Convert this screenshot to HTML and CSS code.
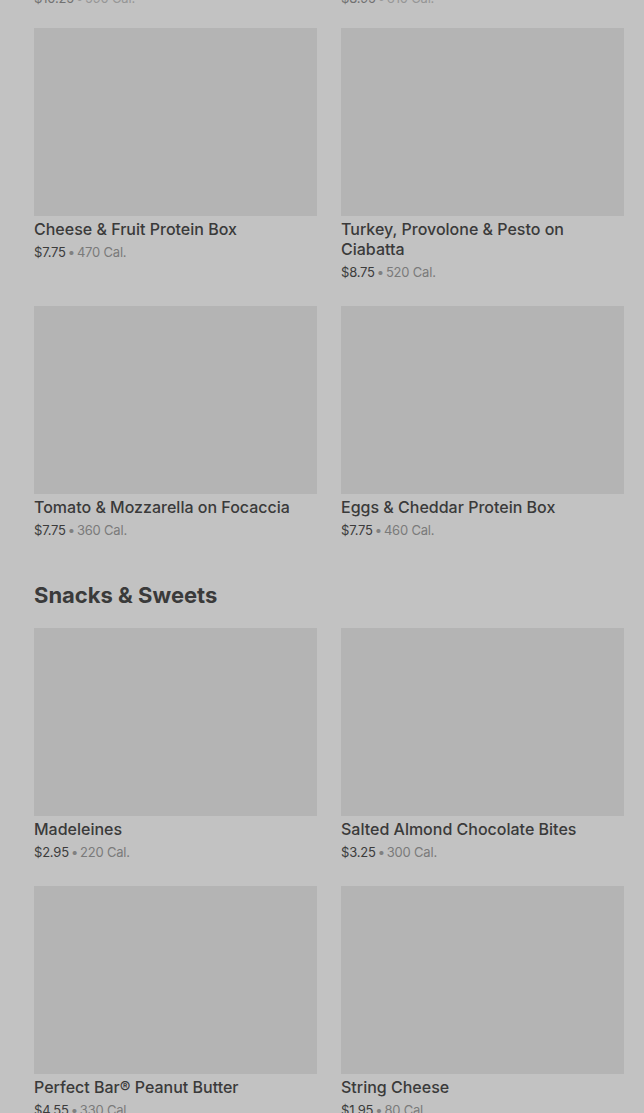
FILE: index.html
```html
<!DOCTYPE html>
<html lang="en">
<head>
<meta charset="utf-8">
<title>Menu</title>
<link rel="stylesheet" href="styles.css">
</head>
<body>
<main class="menu">
  <div class="grid prev">
    <div class="card"><div class="meta"><span class="price">$10.25</span><span class="dot">•</span><span class="cal">590 Cal.</span></div></div>
    <div class="card"><div class="meta"><span class="price">$8.95</span><span class="dot">•</span><span class="cal">610 Cal.</span></div></div>
  </div>

  <div class="grid">
    <div class="card">
      <div class="thumb"></div>
      <div class="name">Cheese &amp; Fruit Protein Box</div>
      <div class="meta"><span class="price">$7.75</span><span class="dot">•</span><span class="cal">470 Cal.</span></div>
    </div>
    <div class="card">
      <div class="thumb"></div>
      <div class="name">Turkey, Provolone &amp; Pesto on Ciabatta</div>
      <div class="meta"><span class="price">$8.75</span><span class="dot">•</span><span class="cal">520 Cal.</span></div>
    </div>
    <div class="card">
      <div class="thumb"></div>
      <div class="name">Tomato &amp; Mozzarella on Focaccia</div>
      <div class="meta"><span class="price">$7.75</span><span class="dot">•</span><span class="cal">360 Cal.</span></div>
    </div>
    <div class="card">
      <div class="thumb"></div>
      <div class="name">Eggs &amp; Cheddar Protein Box</div>
      <div class="meta"><span class="price">$7.75</span><span class="dot">•</span><span class="cal">460 Cal.</span></div>
    </div>
  </div>

  <h2 class="section-title">Snacks &amp; Sweets</h2>

  <div class="grid">
    <div class="card">
      <div class="thumb"></div>
      <div class="name">Madeleines</div>
      <div class="meta"><span class="price">$2.95</span><span class="dot">•</span><span class="cal">220 Cal.</span></div>
    </div>
    <div class="card">
      <div class="thumb"></div>
      <div class="name">Salted Almond Chocolate Bites</div>
      <div class="meta"><span class="price">$3.25</span><span class="dot">•</span><span class="cal">300 Cal.</span></div>
    </div>
    <div class="card">
      <div class="thumb"></div>
      <div class="name">Perfect Bar® Peanut Butter</div>
      <div class="meta"><span class="price">$4.55</span><span class="dot">•</span><span class="cal">330 Cal.</span></div>
    </div>
    <div class="card">
      <div class="thumb"></div>
      <div class="name">String Cheese</div>
      <div class="meta"><span class="price">$1.95</span><span class="dot">•</span><span class="cal">80 Cal.</span></div>
    </div>
  </div>
</main>
</body>
</html>
```

FILE: styles.css
```css
html, body {
  margin: 0;
  padding: 0;
  background: #c2c2c2;
  overflow: hidden;
}
body {
  font-family: Inter, "Noto Sans", Arial, sans-serif;
  color: #3a3a3a;
}
.menu {
  display: flex;
  flex-direction: column;
  padding: 0 20px 0 34px;
}
.grid {
  display: grid;
  grid-template-columns: 1fr 1fr;
  column-gap: 24px;
  row-gap: 24px;
}
.prev {
  margin-top: -15px;
  margin-bottom: 20px;
}
.prev .meta {
  opacity: 0.6;
}
.thumb {
  height: 188px;
  background: #b4b4b4;
}
.name {
  margin-top: 3px;
  font-size: 16px;
  line-height: 20px;
  font-weight: 500;
  color: #3a3a3a;
}
.meta {
  margin-top: 3px;
  font-size: 13px;
  line-height: 20px;
  height: 20px;
  letter-spacing: -0.2px;
}
.price {
  color: #3c3c3c;
}
.dot {
  color: #808080;
  margin: 0 2px;
}
.cal {
  color: #7a7a7a;
}
.section-title {
  margin: 42px 0 20px;
  font-size: 22px;
  line-height: 26px;
  font-weight: 700;
  color: #3a3a3a;
}
```
